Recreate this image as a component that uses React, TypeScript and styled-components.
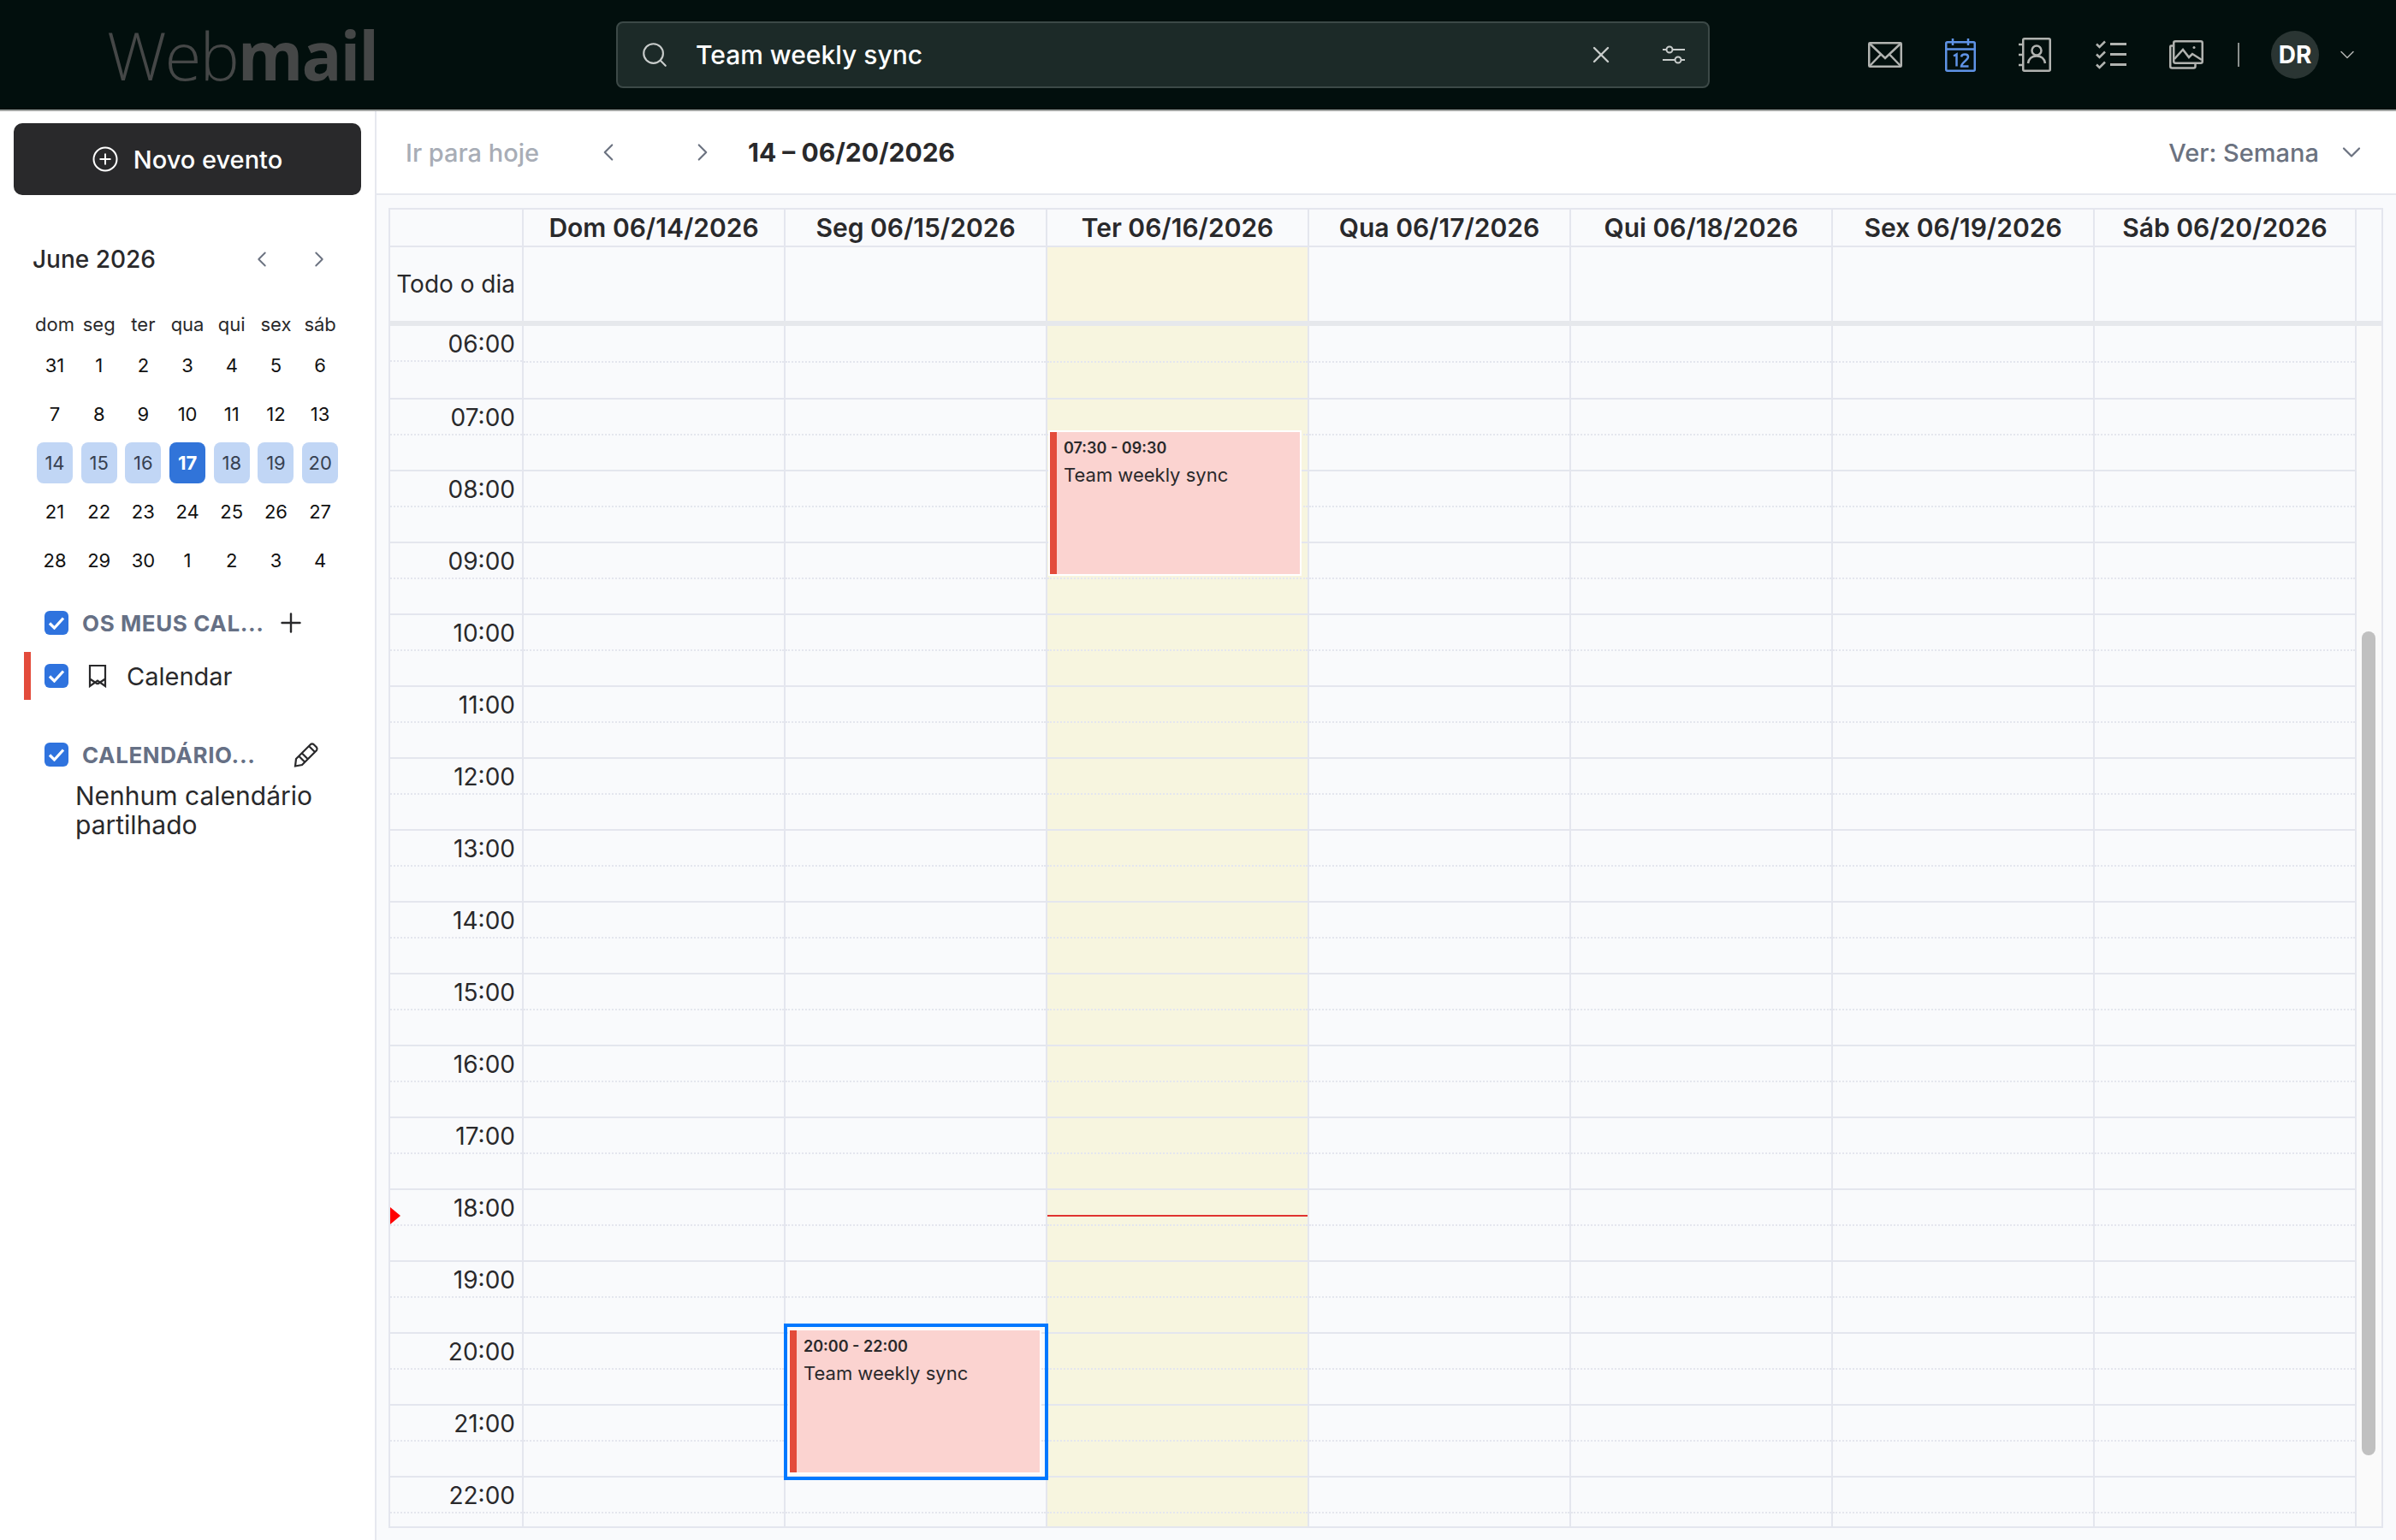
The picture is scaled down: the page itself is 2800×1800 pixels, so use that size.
import styled, { createGlobalStyle } from "styled-components";
import { ChevronDown, ChevronLeft, ChevronRight, Plus, Search, X } from "lucide-react";

const GlobalStyle = createGlobalStyle`
  html, body {
    margin: 0;
    padding: 0;
    background: #fff;
    font-family: Inter, "Liberation Sans", sans-serif;
  }
  * { box-sizing: border-box; }
`;

const Page = styled.div`
  width: 2800px;
  height: 1800px;
  display: flex;
  flex-direction: column;
  overflow: hidden;
  color: #29292b;
`;

const TopBar = styled.header`
  height: 130px;
  flex: none;
  background: #020f0d;
  border-bottom: 2px solid #a3a5a3;
  display: flex;
  align-items: center;
  padding-left: 125px;
`;

const Logo = styled.div`
  width: 595px;
  font-family: "Open Sans", sans-serif;
  font-size: 78px;
  font-weight: 300;
  letter-spacing: -2px;
  line-height: 1;
  color: #454747;
  b { font-weight: 700; }
`;

const SearchBox = styled.div`
  width: 1278px;
  height: 78px;
  background: #1c2a28;
  border: 2px solid #3c4947;
  border-radius: 8px;
  display: flex;
  align-items: center;
  padding: 0 26px 0 26px;
  color: #fff;
  font-size: 30px;
  font-weight: 500;
  svg { flex: none; color: #c8cccb; }
`;

const SearchText = styled.span`
  flex: 1;
  margin-left: 31px;
`;

const HeaderIcons = styled.nav`
  margin-left: 185px;
  display: flex;
  align-items: center;
`;

const AppIcon = styled.div<{ $gap: number }>`
  margin-right: ${(p) => p.$gap}px;
  display: flex;
`;

const Divider = styled.div`
  width: 2px;
  height: 28px;
  background: #8a8f8d;
  margin: 0 37px 0 40px;
`;

const Avatar = styled.div`
  width: 56px;
  height: 56px;
  border-radius: 50%;
  background: #2a3533;
  color: #fff;
  font-weight: 700;
  font-size: 28px;
  display: flex;
  align-items: center;
  justify-content: center;
  margin-right: 19px;
`;

const Body = styled.div`
  flex: 1;
  display: flex;
  min-height: 0;
`;

const Sidebar = styled.aside`
  width: 440px;
  flex: none;
  border-right: 2px solid #e6e8ef;
  padding: 14px 16px 0;
`;

const NewEvent = styled.button`
  width: 406px;
  height: 84px;
  border: 0;
  border-radius: 10px;
  background: #29292b;
  color: #fff;
  font: 500 29px Inter, sans-serif;
  display: flex;
  align-items: center;
  justify-content: center;
  gap: 18px;
`;

const MonthRow = styled.div`
  display: flex;
  align-items: center;
  margin: 58px 0 0 22px;
  height 40px;
  font-size: 28px;
  font-weight: 500;
  svg { color: #6b7280; flex: none; }
`;

const MonthName = styled.span`
  width: 253px;
`;

const MonthNav = styled.div`
  display: flex;
  gap: 37px;
`;

const MiniGrid = styled.div`
  display: grid;
  grid-template-columns: repeat(7, 42px);
  column-gap: 9.7px;
  margin: 40px 0 0 27px;
`;

const WeekDay = styled.div`
  height: 38px;
  display: flex;
  align-items: center;
  justify-content: center;
  white-space: nowrap;
  font-size: 22px;
`;

const MiniDay = styled.div<{ $week?: boolean; $today?: boolean }>`
  height: 48px;
  margin: 4.5px 0;
  display: flex;
  align-items: center;
  justify-content: center;
  border-radius: 8px;
  font-size: 22px;
  font-weight: ${(p) => (p.$today ? 700 : 400)};
  color: ${(p) => (p.$today ? "#fff" : p.$week ? "#374151" : "#111")};
  background: ${(p) => (p.$today ? "#3174d9" : p.$week ? "#c1d6f5" : "transparent")};
`;

const SectionRow = styled.div<{ $top: number }>`
  display: flex;
  align-items: center;
  height: 30px;
  margin: ${(p) => p.$top}px 0 0 36px;
`;

const Check = styled.div`
  width: 28px;
  height: 28px;
  flex: none;
  border-radius: 6px;
  background: #2f73de;
  display: flex;
  align-items: center;
  justify-content: center;
`;

const SectionTitle = styled.span<{ $width: number }>`
  width: ${(p) => p.$width}px;
  margin-left: 16px;
  color: #667085;
  font-size: 26px;
  font-weight: 700;
  letter-spacing: 0.6px;
  white-space: nowrap;
`;

const CalendarRow = styled.div`
  height: 56px;
  margin: 19px 0 0 12px;
  border-left: 8px solid #e34b3b;
  display: flex;
  align-items: center;
  padding-left: 16px;
  gap: 23px;
  font-size: 29px;
`;

const EmptyNote = styled.p`
  margin: 16px 0 0 72px;
  font-size: 30px;
  line-height: 34px;
  width: 300px;
`;

const Main = styled.main`
  flex: 1;
  display: flex;
  flex-direction: column;
  min-width: 0;
  background: #f9fafc;
`;

const Toolbar = styled.div`
  height: 98px;
  flex: none;
  background: #fff;
  border-bottom: 2px solid #e6e8ef;
  display: flex;
  align-items: center;
  padding: 0 34px;
  font-size: 29px;
  font-weight: 500;
  svg { flex: none; color: #6b7280; }
`;

const TodayLink = styled.span`
  width: 220px;
  color: #a8adb6;
`;

const DateRange = styled.span`
  margin-left: 36px;
  font-size: 30px;
  font-weight: 700;
  white-space: nowrap;
`;

const ViewSelect = styled.div`
  margin-left: auto;
  display: flex;
  align-items: center;
  gap: 20px;
  color: #6b7280;
`;

const NavGap = styled.div`
  width: 76px;
`;

const Calendar = styled.div`
  margin: 15px 15px 0 14px;
  height: 1543px;
  border: 2px solid #e4e6ee;
  display: flex;
  flex-direction: column;
  position: relative;
`;

const HeadRow = styled.div`
  height: 44px;
  flex: none;
  display: grid;
  grid-template-columns: 156px repeat(7, 306px);
`;

const HeadCell = styled.div`
  display: flex;
  align-items: center;
  justify-content: center;
  border-right: 2px solid #e4e6ee;
  border-bottom: 2px solid #e4e6ee;
  font-size: 30px;
  font-weight: 600;
  white-space: nowrap;
`;

const AllDayRow = styled.div`
  height: 86px;
  flex: none;
  display: grid;
  grid-template-columns: 156px repeat(7, 306px);
`;

const AllDayLabel = styled.div`
  display: flex;
  align-items: center;
  justify-content: flex-end;
  padding-right: 8px;
  border-right: 2px solid #e4e6ee;
  font-size: 28px;
  white-space: nowrap;
`;

const AllDayCell = styled.div<{ $today?: boolean }>`
  border-right: 2px solid #e4e6ee;
  background: ${(p) => (p.$today ? "#f9f5df" : "transparent")};
`;

const Band = styled.div`
  height: 6px;
  flex: none;
  margin-right: 0;
  background: #e6e8ec;
`;

const ScrollArea = styled.div`
  flex: 1;
  min-height: 0;
  overflow: hidden;
  display: flex;
  position: relative;
`;

const Week = styled.div`
  width: 2298px;
  flex: none;
  display: grid;
  grid-template-columns: 156px repeat(7, 306px);
`;

const TimeCol = styled.div`
  border-right: 2px solid #e4e6ee;
  position: relative;
`;

const DayCol = styled.div<{ $today?: boolean }>`
  border-right: 2px solid #e4e6ee;
  position: relative;
  background: ${(p) => (p.$today ? "#f7f5df" : "transparent")};
`;

const Hour = styled.div<{ $first?: boolean }>`
  height: 84px;
  border-top: ${(p) => (p.$first ? "0" : "2px solid #e4e6ee")};
  position: relative;
  &::after {
    content: "";
    position: absolute;
    left: 0;
    right: 0;
    top: ${(p) => (p.$first ? 41 : 40)}px;
    border-top: 2px dotted #e4e6ee;
  }
`;

const HourLabel = styled.div`
  height: 84px;
  border-top: 2px solid #e4e6ee;
  padding: 2px 8px 0 0;
  text-align: right;
  font-size: 28px;
  line-height: 38px;
  position: relative;
  &::after {
    content: "";
    position: absolute;
    left: 0;
    right: 0;
    top: 40px;
    border-top: 2px dotted #e4e6ee;
  }
`;

const FirstLabel = styled(HourLabel)`
  border-top: 0;
`;

const NowArrow = styled.div`
  position: absolute;
  left: 0;
  top: 1030px;
  width: 0;
  height: 0;
  border-left: 12px solid #f00;
  border-top: 10px solid transparent;
  border-bottom: 10px solid transparent;
  z-index: 2;
`;

const NowLine = styled.div`
  position: absolute;
  left: 0;
  right: 0;
  top: 1039px;
  height: 2px;
  background: #e0332f;
  z-index: 2;
`;

const EventBox = styled.div<{ $selected?: boolean; $top: number; $left: number; $width: number; $height: number }>`
  position: absolute;
  top: ${(p) => p.$top}px;
  left: ${(p) => p.$left}px;
  width: ${(p) => p.$width}px;
  height: ${(p) => p.$height}px;
  background: #fbd3d0;
  border-left: 8px solid #e34b3b;
  padding: 8px 0 0 8px;
  z-index: 3;
  outline: 2px solid #fff;
  &::after {
    content: "";
    display: ${(p) => (p.$selected ? "block" : "none")};
    position: absolute;
    top: -8px;
    left: -15px;
    right: -10px;
    bottom: -9px;
    border: 4px solid #0078ff;
    pointer-events: none;
  }
`;

const EventTime = styled.div`
  font-size: 18px;
  font-weight: 600;
  line-height: 22px;
`;

const EventTitle = styled.div`
  margin-top: 7px;
  font-size: 22px;
  line-height: 26px;
  white-space: nowrap;
`;

const ScrollGutter = styled.div`
  flex: 1;
  background: #fafafa;
  position: relative;
  border-left: 0;
`;

const ScrollThumb = styled.div`
  position: absolute;
  left: 6px;
  top: 357px;
  width: 16px;
  height: 963px;
  border-radius: 8px;
  background: #c0c0c0;
`;

const MailIcon = () => (
  <svg width="40" height="30" viewBox="0 0 40 30" fill="none" stroke="#b1b3b0" strokeWidth="2.5">
    <rect x="1.25" y="1.25" width="37.5" height="27.5" rx="1" />
    <path d="M2 2 20 19 38 2M2 28 15 14.5M38 28 25 14.5" />
  </svg>
);

const CalendarIcon = () => (
  <svg width="36" height="40" viewBox="0 0 36 40" fill="none" stroke="#5f93e6" strokeWidth="2.5">
    <rect x="1.25" y="5.25" width="33.5" height="33.5" rx="1.5" />
    <path d="M1 13.5h34M9 1v8M27 1v8" />
    <path d="M10 21.5l3.5-2v14" />
    <path d="M19 22.5c.5-4 8-4 8 0 0 3.5-8 7-8 11h8.5" />
  </svg>
);

const ContactsIcon = () => (
  <svg width="38" height="40" viewBox="0 0 38 40" fill="none" stroke="#b1b3b0" strokeWidth="2.5">
    <rect x="5.25" y="1.25" width="31.5" height="37.5" rx="1.5" />
    <path d="M0 8h5M0 20h5M0 32h5" />
    <circle cx="21" cy="15" r="5.5" />
    <path d="M11 30c1-6 5-8.5 10-8.5S30 24 31 30" />
  </svg>
);

const TasksIcon = () => (
  <svg width="36" height="34" viewBox="0 0 36 34" fill="none" stroke="#b1b3b0">
    <path d="M1 4.5 4.5 8 11 1.5M1 16.5 4.5 20 11 13.5M1 28.5 4.5 32 11 25.5" strokeWidth="2.5" />
    <path d="M17 4.5h19M17 16.5h19M17 28.5h19" strokeWidth="3" />
  </svg>
);

const PhotosIcon = () => (
  <svg width="40" height="34" viewBox="0 0 40 34" fill="none" stroke="#b1b3b0" strokeWidth="2.5">
    <rect x="5.25" y="1.25" width="33.5" height="25.5" rx="2" />
    <path d="M5.5 6.5H2.25A1 1 0 0 0 1.25 7.5V30.5a2 2 0 0 0 2 2H28.5a2 2 0 0 0 2-2V27" />
    <path d="M6 22 16 11l7 9 4-4 11 7" />
    <circle cx="29" cy="8.5" r="1.5" fill="#b1b3b0" stroke="none" />
  </svg>
);

const FilterIcon = () => (
  <svg width="28" height="24" viewBox="0 0 28 24" fill="none" stroke="#c8cccb" strokeWidth="2">
    <circle cx="9" cy="6" r="3.5" />
    <path d="M1 6h4.5M12.5 6H27" />
    <circle cx="19" cy="18" r="3.5" />
    <path d="M1 18h14.5M22.5 18H27" />
  </svg>
);

const PlusCircle = () => (
  <svg width="30" height="30" viewBox="0 0 30 30" fill="none" stroke="#fff" strokeWidth="2">
    <circle cx="15" cy="15" r="13.5" />
    <path d="M15 8.5v13M8.5 15h13" />
  </svg>
);

const Tick = () => (
  <svg width="20" height="16" viewBox="0 0 20 16" fill="none" stroke="#fff" strokeWidth="3.2">
    <path d="M2 8.5 7.5 14 18 2.5" />
  </svg>
);

const Bookmark = () => (
  <svg width="22" height="28" viewBox="0 0 22 28" fill="none" stroke="#29292b" strokeWidth="2.2">
    <path d="M2 2h18v24l-9-6.5L2 26zM2 17.5l9 6M20 17.5l-9 6" />
  </svg>
);

const Pencil = () => (
  <svg width="30" height="30" viewBox="0 0 30 30" fill="none" stroke="#29292b" strokeWidth="2.2">
    <path d="M3 20 20 3a3 3 0 0 1 3.5 0L27 6.5a3 3 0 0 1 0 3.5L10 27l-8 1.5zM6.5 17 13 23.5M10 13.5 16.5 20M18 5l7 7" />
  </svg>
);

const weekDays = ["dom", "seg", "ter", "qua", "qui", "sex", "sáb"];
const miniDays = [
  31, 1, 2, 3, 4, 5, 6, 7, 8, 9, 10, 11, 12, 13, 14, 15, 16, 17, 18, 19, 20, 21, 22, 23, 24, 25, 26, 27, 28, 29,
  30, 1, 2, 3, 4,
];
const dayHeads = [
  "Dom 06/14/2026",
  "Seg 06/15/2026",
  "Ter 06/16/2026",
  "Qua 06/17/2026",
  "Qui 06/18/2026",
  "Sex 06/19/2026",
  "Sáb 06/20/2026",
];
const hours = ["06", "07", "08", "09", "10", "11", "12", "13", "14", "15", "16", "17", "18", "19", "20", "21", "22"];

export default function App() {
  return (
    <Page>
      <GlobalStyle />
      <TopBar>
        <Logo>
          Web<b>mail</b>
        </Logo>
        <SearchBox>
          <Search size={34} strokeWidth={1.5} />
          <SearchText>Team weekly sync</SearchText>
          <X size={32} strokeWidth={1.8} />
          <div style={{ width: 55 }} />
          <FilterIcon />
        </SearchBox>
        <HeaderIcons>
          <AppIcon $gap={50}><MailIcon /></AppIcon>
          <AppIcon $gap={50}><CalendarIcon /></AppIcon>
          <AppIcon $gap={52}><ContactsIcon /></AppIcon>
          <AppIcon $gap={50}><TasksIcon /></AppIcon>
          <AppIcon $gap={0}><PhotosIcon /></AppIcon>
          <Divider />
          <Avatar>DR</Avatar>
          <ChevronDown size={28} strokeWidth={1.3} color="#b1b3b0" />
        </HeaderIcons>
      </TopBar>
      <Body>
        <Sidebar>
          <NewEvent>
            <PlusCircle />
            Novo evento
          </NewEvent>
          <MonthRow>
            <MonthName>June 2026</MonthName>
            <MonthNav>
              <ChevronLeft size={30} strokeWidth={1.5} />
              <ChevronRight size={30} strokeWidth={1.5} />
            </MonthNav>
          </MonthRow>
          <MiniGrid>
            {weekDays.map((d) => (
              <WeekDay key={d}>{d}</WeekDay>
            ))}
            {miniDays.map((d, i) => (
              <MiniDay key={i} $week={i >= 14 && i <= 20} $today={i === 17}>
                {d}
              </MiniDay>
            ))}
          </MiniGrid>
          <SectionRow $top={30}>
            <Check><Tick /></Check>
            <SectionTitle $width={226}>OS MEUS CAL...</SectionTitle>
            <Plus size={36} strokeWidth={1.6} />
          </SectionRow>
          <CalendarRow>
            <Check><Tick /></Check>
            <Bookmark />
            <span>Calendar</span>
          </CalendarRow>
          <SectionRow $top={49}>
            <Check><Tick /></Check>
            <SectionTitle $width={247}>CALENDÁRIO...</SectionTitle>
            <Pencil />
          </SectionRow>
          <EmptyNote>Nenhum calendário partilhado</EmptyNote>
        </Sidebar>
        <Main>
          <Toolbar>
            <TodayLink>Ir para hoje</TodayLink>
            <ChevronLeft size={34} strokeWidth={1.5} />
            <NavGap />
            <ChevronRight size={34} strokeWidth={1.5} />
            <DateRange>14 – 06/20/2026</DateRange>
            <ViewSelect>
              Ver: Semana
              <ChevronDown size={36} strokeWidth={1.5} />
            </ViewSelect>
          </Toolbar>
          <Calendar>
            <HeadRow>
              <HeadCell />
              {dayHeads.map((d) => (
                <HeadCell key={d}>{d}</HeadCell>
              ))}
            </HeadRow>
            <AllDayRow>
              <AllDayLabel>Todo o dia</AllDayLabel>
              {dayHeads.map((d, i) => (
                <AllDayCell key={d} $today={i === 2} />
              ))}
            </AllDayRow>
            <Band />
            <ScrollArea>
              <Week>
                <TimeCol>
                  {hours.map((h, i) =>
                    i === 0 ? (
                      <FirstLabel key={h}>{h}:00</FirstLabel>
                    ) : (
                      <HourLabel key={h}>{h}:00</HourLabel>
                    )
                  )}
                  <NowArrow />
                </TimeCol>
                {dayHeads.map((d, i) => (
                  <DayCol key={d} $today={i === 2}>
                    {hours.map((h, j) => (
                      <Hour key={h} $first={j === 0} />
                    ))}
                    {i === 2 && <NowLine />}
                    {i === 2 && (
                      <EventBox $top={124} $left={3} $width={292} $height={166}>
                        <EventTime>07:30 - 09:30</EventTime>
                        <EventTitle>Team weekly sync</EventTitle>
                      </EventBox>
                    )}
                    {i === 1 && (
                      <EventBox $selected $top={1174} $left={5} $width={292} $height={166}>
                        <EventTime>20:00 - 22:00</EventTime>
                        <EventTitle>Team weekly sync</EventTitle>
                      </EventBox>
                    )}
                  </DayCol>
                ))}
              </Week>
              <ScrollGutter>
                <ScrollThumb />
              </ScrollGutter>
            </ScrollArea>
          </Calendar>
        </Main>
      </Body>
    </Page>
  );
}
